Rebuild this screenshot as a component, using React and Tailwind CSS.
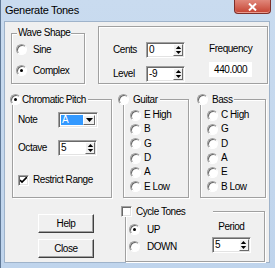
import React from "react";

const etched = "border border-[#a0a0a0] shadow-[inset_1px_1px_0_#fff,1px_1px_0_#fff]";
const sunken =
  "border border-t-[#a0a0a0] border-l-[#a0a0a0] border-r-white border-b-white shadow-[inset_1px_1px_0_#696969,inset_-1px_-1px_0_#e3e3e3]";

function Radio({ checked }) {
  return (
    <span className="relative inline-block w-[11px] h-[11px] shrink-0 rounded-full bg-white border border-t-[#a0a0a0] border-l-[#a0a0a0] border-r-white border-b-white shadow-[inset_1px_1px_0_#696969]">
      {checked && <span className="absolute left-[3px] top-[3px] w-[3px] h-[3px] rounded-full bg-black" />}
    </span>
  );
}

function Check({ checked }) {
  return (
    <span className={`relative inline-block w-[11px] h-[11px] shrink-0 bg-white ${sunken}`}>
      {checked && (
        <svg className="absolute left-[1px] top-[1px]" width="7" height="7" viewBox="0 0 7 7">
          <path d="M0 3 L2 5 L7 0" stroke="#000" strokeWidth="1.6" fill="none" />
        </svg>
      )}
    </span>
  );
}

function SpinArrows() {
  return (
    <span className="flex w-[10px] h-full flex-col items-center justify-center bg-[#f0f0f0] border border-t-white border-l-white border-r-[#696969] border-b-[#696969]">
      <svg width="7" height="11" viewBox="0 0 7 11">
        <path d="M3.5 1 L6.5 4.5 L0.5 4.5 Z" fill="#000" />
        <path d="M0.5 6.5 L6.5 6.5 L3.5 10 Z" fill="#000" />
      </svg>
    </span>
  );
}

function Spin({ value }) {
  return (
    <div className={`flex h-[16px] w-[39px] bg-white ${sunken} p-[1px]`}>
      <span className="flex-1 pl-[1px] leading-[12px]">{value}</span>
      <SpinArrows />
    </div>
  );
}

function Btn({ children }) {
  return (
    <div className="flex h-[19px] w-[56px] items-center justify-center bg-[#f0f0f0] border border-t-white border-l-white border-r-[#404040] border-b-[#404040] shadow-[inset_-1px_-1px_0_#a0a0a0]">
      {children}
    </div>
  );
}

function Item({ label, checked }) {
  return (
    <div className="flex h-[14.3px] items-center gap-[3px]">
      <Radio checked={checked} />
      <span>{label}</span>
    </div>
  );
}

export default function App() {
  return (
    <div className="w-[275px] h-[268px] flex flex-col bg-gradient-to-b from-[#c9dbef] to-[#bfd4ec] border-l border-[#5f7896] text-[10px] tracking-[-0.45px] leading-none text-black font-['Liberation_Sans',sans-serif]">
      {/* title bar */}
      <div className="flex h-[21px] items-start">
        <span className="mt-[4px] ml-[4px] text-[11px] tracking-[-0.3px] leading-[12px]">Generate Tones</span>
        <div className="ml-auto mr-[4px] flex h-[14px] w-[37px] items-center justify-center rounded-b-[4px] border border-t-0 border-[#7d2f2a] bg-gradient-to-b from-[#e0877a] to-[#c44030] shadow-[inset_0_-1px_0_#e99a8d]">
          <svg width="9" height="8" viewBox="0 0 9 8">
            <path d="M1 0.5 L8 7.5 M8 0.5 L1 7.5" stroke="#fff" strokeWidth="2" />
          </svg>
        </div>
      </div>

      {/* client */}
      <div className="ml-[3px] mr-[5px] mb-[5px] flex-1 bg-[#f0f0f0] border border-[#9fb3ca] flex flex-col">
        {/* row 1 */}
        <div className="flex items-start h-[62px]">
          <div className={`relative ml-[6px] mt-[11px] w-[74px] h-[51px] ${etched}`}>
            <span className="absolute left-[5px] top-[-6px] bg-[#f0f0f0] px-[1px]">Wave Shape</span>
            <div className="flex flex-col gap-[10px] pl-[4px] pt-[10px]">
              <div className="flex items-center gap-[6px] h-[11px]">
                <Radio />
                <span>Sine</span>
              </div>
              <div className="flex items-center gap-[6px] h-[11px]">
                <Radio checked />
                <span>Complex</span>
              </div>
            </div>
          </div>
          <div className={`ml-[13px] mt-[4px] w-[170px] h-[58px] ${etched} flex`}>
            <div className="grid grid-cols-[33px_39px] gap-y-[5px] items-center pl-[14px] pt-[13px]">
              <span>Cents</span>
              <Spin value="0" />
              <span>Level</span>
              <Spin value="-9" />
            </div>
            <div className="ml-[24px] flex flex-col items-center pt-[17px]">
              <span>Frequency</span>
              <div className="mt-[8px] flex h-[15px] w-[43px] items-center justify-center bg-white">440.000</div>
            </div>
          </div>
        </div>

        {/* row 2 */}
        <div className="flex items-start h-[99px] mt-[15px]">
          <div className={`relative ml-[7px] w-[100px] h-[99px] ${etched}`}>
            <div className="absolute left-[-3px] top-[-6px] flex items-center gap-[1px] bg-[#f0f0f0] pr-[2px]">
              <Radio checked />
              <span>Chromatic Pitch</span>
            </div>
            <div className="flex flex-col pl-[5px] pt-[12px]">
              <div className="flex items-center h-[16px]">
                <span className="w-[40px]">Note</span>
                <div className={`flex h-[16px] w-[40px] bg-white ${sunken} p-[2px]`}>
                  <span className="flex w-[22px] items-center bg-[#3399ff] pl-[1px] text-white">A</span>
                  <span className="ml-auto flex w-[12px] items-center justify-center bg-[#f0f0f0] border border-t-white border-l-white border-r-[#696969] border-b-[#696969]">
                    <svg width="7" height="4" viewBox="0 0 7 4">
                      <path d="M0 0 L7 0 L3.5 4 Z" fill="#000" />
                    </svg>
                  </span>
                </div>
              </div>
              <div className="flex items-center h-[16px] mt-[12px]">
                <span className="w-[40px]">Octave</span>
                <Spin value="5" />
              </div>
              <div className="flex items-center gap-[4px] h-[12px] mt-[18px]">
                <Check checked />
                <span>Restrict Range</span>
              </div>
            </div>
          </div>

          <div className={`relative ml-[11px] w-[66px] h-[99px] ${etched}`}>
            <div className="absolute left-[-6px] top-[-6px] flex items-center gap-[4px] bg-[#f0f0f0] pr-[2px]">
              <Radio />
              <span>Guitar</span>
            </div>
            <div className="flex flex-col pl-[6px] pt-[8px]">
              <Item label="E High" />
              <Item label="B" />
              <Item label="G" />
              <Item label="D" />
              <Item label="A" />
              <Item label="E Low" />
            </div>
          </div>

          <div className={`relative ml-[11px] w-[66px] h-[99px] ${etched}`}>
            <div className="absolute left-[-4px] top-[-6px] flex items-center gap-[4px] bg-[#f0f0f0] pr-[2px]">
              <Radio />
              <span>Bass</span>
            </div>
            <div className="flex flex-col pl-[6px] pt-[8px]">
              <Item label="C High" />
              <Item label="G" />
              <Item label="D" />
              <Item label="A" />
              <Item label="E" />
              <Item label="B Low" />
            </div>
          </div>
        </div>

        {/* row 3 */}
        <div className="flex items-start">
          <div className="ml-[33px] mt-[16px] flex flex-col gap-[6px]">
            <Btn>Help</Btn>
            <Btn>Close</Btn>
          </div>
          <div className={`relative ml-[31px] mt-[13px] w-[140px] h-[51px] ${etched}`}>
            <div className="absolute left-[-5px] top-[-6px] flex w-[92px] items-center gap-[4px] bg-[#f0f0f0] pr-[2px]">
              <Check />
              <span>Cycle Tones</span>
            </div>
            <div className="flex pt-[12px] pl-[3px]">
              <div className="flex flex-col gap-[6px]">
                <div className="flex items-center gap-[7px] h-[11px]">
                  <Radio checked />
                  <span>UP</span>
                </div>
                <div className="flex items-center gap-[7px] h-[11px]">
                  <Radio />
                  <span>DOWN</span>
                </div>
              </div>
              <div className="ml-[35px] flex flex-col items-center">
                <span className="mt-[-2px]">Period</span>
                <div className="mt-[5px]">
                  <Spin value="5" />
                </div>
              </div>
            </div>
          </div>
        </div>
      </div>
    </div>
  );
}
